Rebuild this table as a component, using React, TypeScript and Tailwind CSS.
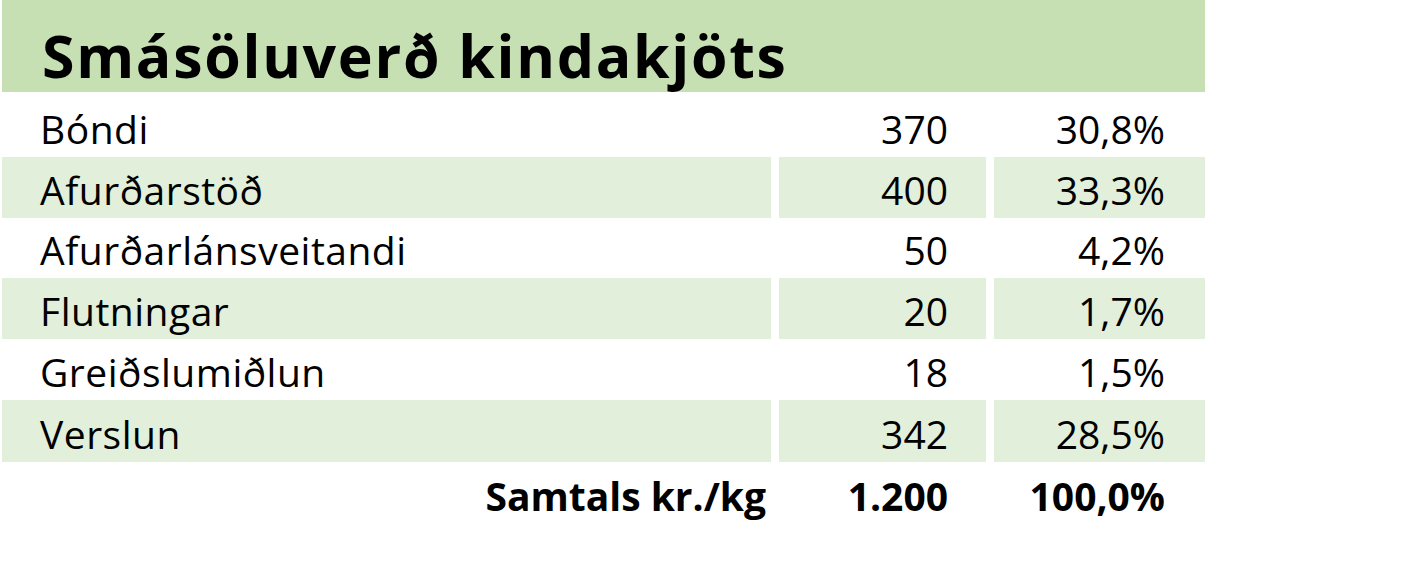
const ROWS = [
  { label: "Bóndi", value: "370", share: "30,8%", h: "h-[65px]" },
  { label: "Afurðarstöð", value: "400", share: "33,3%", h: "h-[61px]", shaded: true },
  { label: "Afurðarlánsveitandi", value: "50", share: "4,2%", h: "h-[60px]" },
  { label: "Flutningar", value: "20", share: "1,7%", h: "h-[61px]", shaded: true },
  { label: "Greiðslumiðlun", value: "18", share: "1,5%", h: "h-[61px]" },
  { label: "Verslun", value: "342", share: "28,5%", h: "h-[62px]", shaded: true },
];

export default function App() {
  return (
    <div className="w-[1421px] h-[585px] bg-white text-black overflow-hidden font-['Open_Sans','Liberation_Sans',sans-serif]">
      <div className="ml-[2px] w-[1203px]">
        {/* Title band */}
        <div className="h-[92px] bg-[#c6e0b4] flex items-end pl-[40px] pb-[7px]">
          <h1 className="text-[59px] leading-none font-bold tracking-[1.7px]">Smásöluverð kindakjöts</h1>
        </div>

        {/* Rows */}
        {ROWS.map((row) => (
          <div key={row.label} className={`grid grid-cols-[769px_207px_211px] gap-x-2 ${row.h}`}>
            <div className={`flex items-end pl-[38px] pb-[9px] ${row.shaded ? "bg-[#e2efda]" : ""}`}>
              <span className="text-[39px] leading-none tracking-[0.5px]">{row.label}</span>
            </div>
            <div className={`flex items-end justify-end pr-[38px] pb-[9px] ${row.shaded ? "bg-[#e2efda]" : ""}`}>
              <span className="text-[39px] leading-none">{row.value}</span>
            </div>
            <div className={`flex items-end justify-end pr-[40px] pb-[9px] ${row.shaded ? "bg-[#e2efda]" : ""}`}>
              <span className="text-[39px] leading-none">{row.share}</span>
            </div>
          </div>
        ))}

        {/* Total */}
        <div className="grid grid-cols-[769px_207px_211px] gap-x-2 h-[62px] font-bold">
          <div className="flex items-end justify-end pr-[5px] pb-[9px]">
            <span className="text-[39px] leading-none">Samtals kr./kg</span>
          </div>
          <div className="flex items-end justify-end pr-[38px] pb-[9px]">
            <span className="text-[39px] leading-none">1.200</span>
          </div>
          <div className="flex items-end justify-end pr-[40px] pb-[9px]">
            <span className="text-[39px] leading-none">100,0%</span>
          </div>
        </div>
      </div>
    </div>
  );
}
